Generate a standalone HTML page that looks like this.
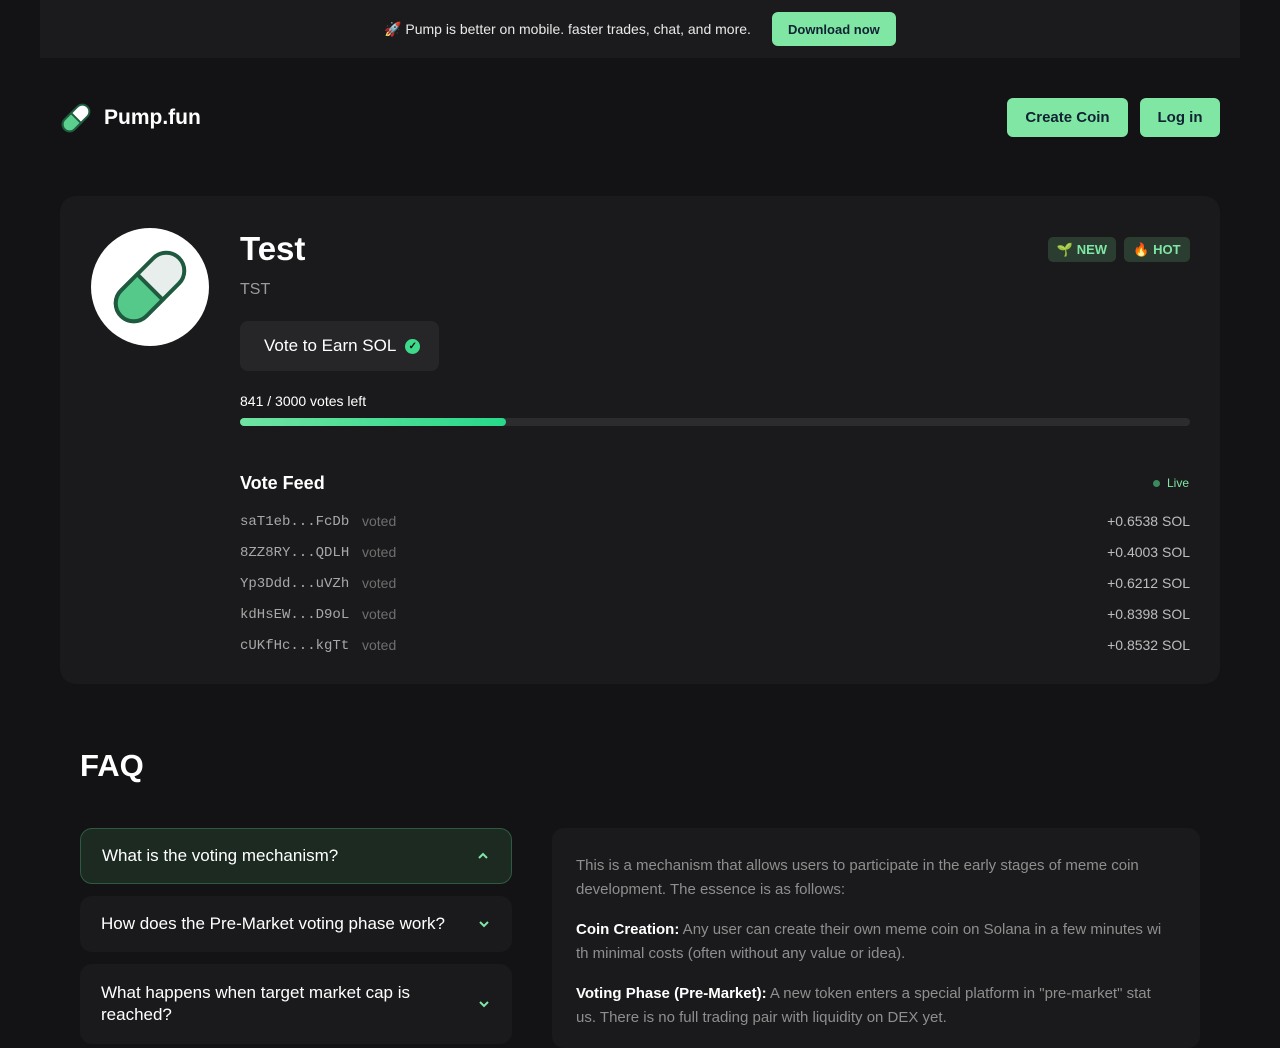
<!DOCTYPE html>
<html><head><meta charset="utf-8"><style>
*{box-sizing:border-box;margin:0;padding:0}
body{width:1280px;height:1024px;overflow:hidden;background:#131315;font-family:"Liberation Sans",sans-serif;color:#fff;position:relative}
.banner{position:absolute;left:40px;top:0;width:1200px;height:58px;background:#1b1b1d;display:flex;align-items:center;justify-content:center;font-size:14px;color:#e8e8e8}
.btn{background:#7fe6a4;color:#123;border-radius:6px;font-weight:bold;display:flex;align-items:center;justify-content:center}
.card{position:absolute;left:60px;top:196px;width:1160px;height:488px;background:#1a1a1c;border-radius:16px}
.abs{position:absolute}
.mono{font-family:"Liberation Mono",monospace;font-size:14px;color:#a8a8a8}
.row{position:absolute;left:180px;width:950px;height:20px;font-size:14px}
.row .v{color:#6e6e6e;position:absolute;left:122px;top:1px}
.row .s{position:absolute;right:0;top:1px;color:#bdbdbd}
.q{position:absolute;left:80px;width:432px;background:#1a1a1c;border-radius:12px;font-size:17px;color:#fff;padding-left:21px;display:flex;align-items:center}
.q svg{position:absolute;right:23px;top:50%;margin-top:-5px}
.ans{position:absolute;left:552px;top:828px;width:648px;height:220px;background:#1a1a1c;border-radius:12px;padding:26px 24px;font-size:15px;line-height:24px;color:#8e8e8e;white-space:nowrap}
.ans b{color:#fff}
.ans p{margin-bottom:16px}
</style></head><body>
<div class="banner"><span>🚀 Pump is better on mobile. faster trades, chat, and more.</span><div class="btn" style="width:124px;height:34px;margin-left:21px;font-size:13px">Download now</div></div>

<svg class="abs" style="left:58px;top:100px" width="36" height="36" viewBox="0 0 36 36"><g transform="rotate(-45 18 18)"><rect x="2" y="11" width="32" height="14" rx="7" fill="#fff" stroke="#1e5b3f" stroke-width="2"/><path d="M9 11h9v14H9a7 7 0 0 1 0-14z" fill="#5bd08e" stroke="#1e5b3f" stroke-width="2"/></g></svg>
<div class="abs" style="left:104px;top:106px;font-size:21px;font-weight:bold">Pump.fun</div>
<div class="btn abs" style="left:1007px;top:98px;width:121px;height:39px;font-size:15px">Create Coin</div>
<div class="btn abs" style="left:1140px;top:98px;width:80px;height:39px;font-size:15px">Log in</div>

<div class="card">
<div class="abs" style="left:31px;top:32px;width:118px;height:118px;border-radius:50%;background:#fff"></div>
<svg class="abs" style="left:41px;top:42px" width="98" height="98" viewBox="0 0 98 98"><g transform="rotate(-45 49 49)"><rect x="8" y="31" width="82" height="36" rx="18" fill="#e8eeec" stroke="#1f5a40" stroke-width="4"/><path d="M26 31h23v36H26a18 18 0 0 1 0-36z" fill="#55c98a" stroke="#1f5a40" stroke-width="4"/></g></svg>
<div class="abs" style="left:180px;top:34px;font-size:33px;font-weight:bold">Test</div>
<div class="abs" style="left:180px;top:85px;font-size:16px;color:#9a9a9a">TST</div>
<div class="abs" style="left:180px;top:125px;width:199px;height:50px;background:#262628;border-radius:8px;font-size:17px;display:flex;align-items:center;padding-left:24px">Vote to Earn SOL <span style="display:inline-block;width:15px;height:15px;border-radius:50%;background:#3ed98b;margin-left:9px;color:#111;font-size:10px;text-align:center;line-height:15px;font-weight:bold">✓</span></div>
<div class="abs" style="left:988px;top:41px;width:68px;height:25px;background:#2a3d30;border-radius:5px;color:#7fe6a4;font-size:13px;font-weight:bold;display:flex;align-items:center;justify-content:center">🌱 NEW</div>
<div class="abs" style="left:1064px;top:41px;width:66px;height:25px;background:#2a3d30;border-radius:5px;color:#7fe6a4;font-size:13px;font-weight:bold;display:flex;align-items:center;justify-content:center">🔥 HOT</div>
<div class="abs" style="left:180px;top:197px;font-size:14px">841 / 3000 votes left</div>
<div class="abs" style="left:180px;top:222px;width:950px;height:8px;background:#2c2c2e;border-radius:4px"><div style="width:266px;height:8px;border-radius:4px;background:linear-gradient(90deg,#6fe3a2,#28d98a)"></div></div>
<div class="abs" style="left:180px;top:277px;font-size:18px;font-weight:bold">Vote Feed</div>
<div class="abs" style="left:1093px;top:280px;font-size:12px;color:#7fe6a4"><span style="display:inline-block;width:7px;height:7px;border-radius:50%;background:#3a8a5e;margin-right:7px"></span>Live</div>
<div class="row" style="top:316px"><span class="mono">saT1eb...FcDb</span><span class="v">voted</span><span class="s">+0.6538 SOL</span></div>
<div class="row" style="top:347px"><span class="mono">8ZZ8RY...QDLH</span><span class="v">voted</span><span class="s">+0.4003 SOL</span></div>
<div class="row" style="top:378px"><span class="mono">Yp3Ddd...uVZh</span><span class="v">voted</span><span class="s">+0.6212 SOL</span></div>
<div class="row" style="top:409px"><span class="mono">kdHsEW...D9oL</span><span class="v">voted</span><span class="s">+0.8398 SOL</span></div>
<div class="row" style="top:440px"><span class="mono">cUKfHc...kgTt</span><span class="v">voted</span><span class="s">+0.8532 SOL</span></div>
</div>

<div class="abs" style="left:80px;top:748px;font-size:31px;font-weight:bold">FAQ</div>
<div class="q" style="top:828px;height:56px;background:#1c2a22;border:1px solid #2f5a42">What is the voting mechanism?<svg width="10" height="10" viewBox="0 0 10 10"><path d="M1 7l4-4 4 4" fill="none" stroke="#7fe6a4" stroke-width="2"/></svg></div>
<div class="q" style="top:896px;height:56px">How does the Pre-Market voting phase work?<svg width="10" height="10" viewBox="0 0 10 10"><path d="M1 3l4 4 4-4" fill="none" stroke="#7fe6a4" stroke-width="2"/></svg></div>
<div class="q" style="top:964px;height:80px;line-height:22px">What happens when target market cap is<br>reached?<svg width="10" height="10" viewBox="0 0 10 10"><path d="M1 3l4 4 4-4" fill="none" stroke="#7fe6a4" stroke-width="2"/></svg></div>
<div class="ans">
<p>This is a mechanism that allows users to participate in the early stages of meme coin<br>development. The essence is as follows:</p>
<p><b>Coin Creation:</b> Any user can create their own meme coin on Solana in a few minutes wi<br>th minimal costs (often without any value or idea).</p>
<p><b>Voting Phase (Pre-Market):</b> A new token enters a special platform in "pre-market" stat<br>us. There is no full trading pair with liquidity on DEX yet.</p>
</div>
</body></html>
